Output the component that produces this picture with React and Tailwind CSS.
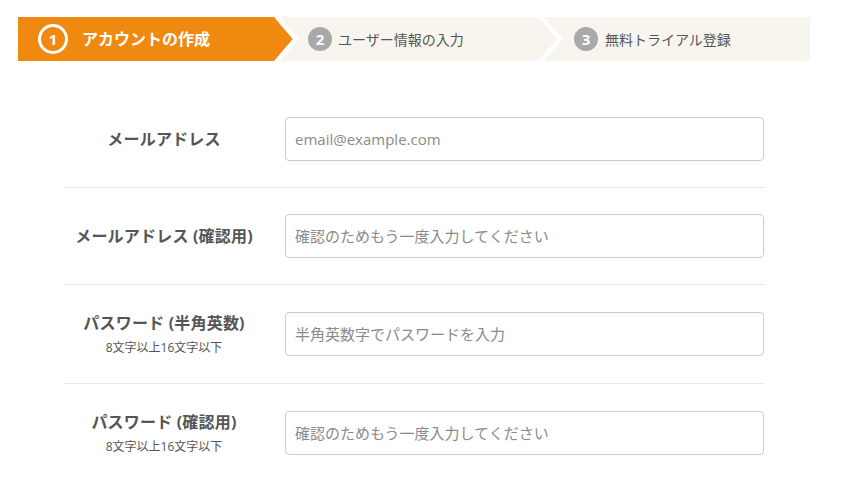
import React from 'react'

const font = { fontFamily: '"Open Sans", "Noto Sans CJK JP", sans-serif' }

const fields = [
  { label: 'メールアドレス', placeholder: 'email@example.com', type: 'email' },
  { label: 'メールアドレス (確認用)', placeholder: '確認のためもう一度入力してください', type: 'email' },
  { label: 'パスワード (半角英数)', note: '8文字以上16文字以下', placeholder: '半角英数字でパスワードを入力', type: 'password' },
  { label: 'パスワード (確認用)', note: '8文字以上16文字以下', placeholder: '確認のためもう一度入力してください', type: 'password' }
]

// white chevron between two steps, optional filled arrow head on the left
const Chevron = ({ fill }) => (
  <svg className="absolute top-0 z-20" width="26" height="44" viewBox="0 0 26 44" style={{ left: '100%', marginLeft: fill ? -5 : -6 }}>
    {fill && <polygon points="0,0 19,22 0,44" fill={fill} />}
    <polygon points="0,0 6,0 25,22 6,44 0,44 19,22" fill="#ffffff" />
  </svg>
)

const Steps = () => (
  <div className="flex h-[44px] w-[792px] bg-[#f7f5ee]">
    <div className="relative flex w-[261px] items-center bg-[#f0890f] pl-[20px]">
      <span className="flex h-[30px] w-[30px] items-center justify-center rounded-full border-[3px] border-white text-[15px] font-bold text-white">
        1
      </span>
      <span className="ml-[14px] text-[16px] font-bold text-white">アカウントの作成</span>
      <Chevron fill="#f0890f" />
    </div>
    <div className="relative ml-[5px] flex w-[260px] items-center pl-[24px]">
      <span className="flex h-[24px] w-[24px] items-center justify-center rounded-full bg-[#a9a9a9] text-[15px] font-bold text-white">
        2
      </span>
      <span className="ml-[6px] text-[14px] text-[#555]">ユーザー情報の入力</span>
      <Chevron />
    </div>
    <div className="ml-[6px] flex flex-1 items-center pl-[24px]">
      <span className="flex h-[24px] w-[24px] items-center justify-center rounded-full bg-[#a9a9a9] text-[15px] font-bold text-white">
        3
      </span>
      <span className="ml-[7px] text-[14px] text-[#555]">無料トライアル登録</span>
    </div>
  </div>
)

const Row = ({ field, last }) => (
  <div className={`flex items-center py-[26px] ${last ? '' : 'border-b border-[#e8e8e8]'}`}>
    <div className="flex w-[200px] flex-col items-center text-[#555]">
      <span className="text-[16px] font-bold leading-[24px] tracking-[0.2px]">{field.label}</span>
      {field.note && <span className="mt-[4px] text-[12px] leading-[18px]">{field.note}</span>}
    </div>
    <input
      type={field.type}
      placeholder={field.placeholder}
      className="ml-[21px] h-[44px] flex-1 rounded-[4px] border border-[#cccccc] px-[9px] text-[15px] text-[#333] outline-none placeholder:text-[#8a8a8a]"
    />
  </div>
)

export default function App() {
  return (
    <div className="min-h-screen bg-white pl-[18px] pt-[17px]" style={font}>
      <Steps />
      <form className="mt-[30px] w-[792px] px-[46px]">
        {fields.map((f, i) => (
          <Row key={i} field={f} last={i === fields.length - 1} />
        ))}
      </form>
    </div>
  )
}
